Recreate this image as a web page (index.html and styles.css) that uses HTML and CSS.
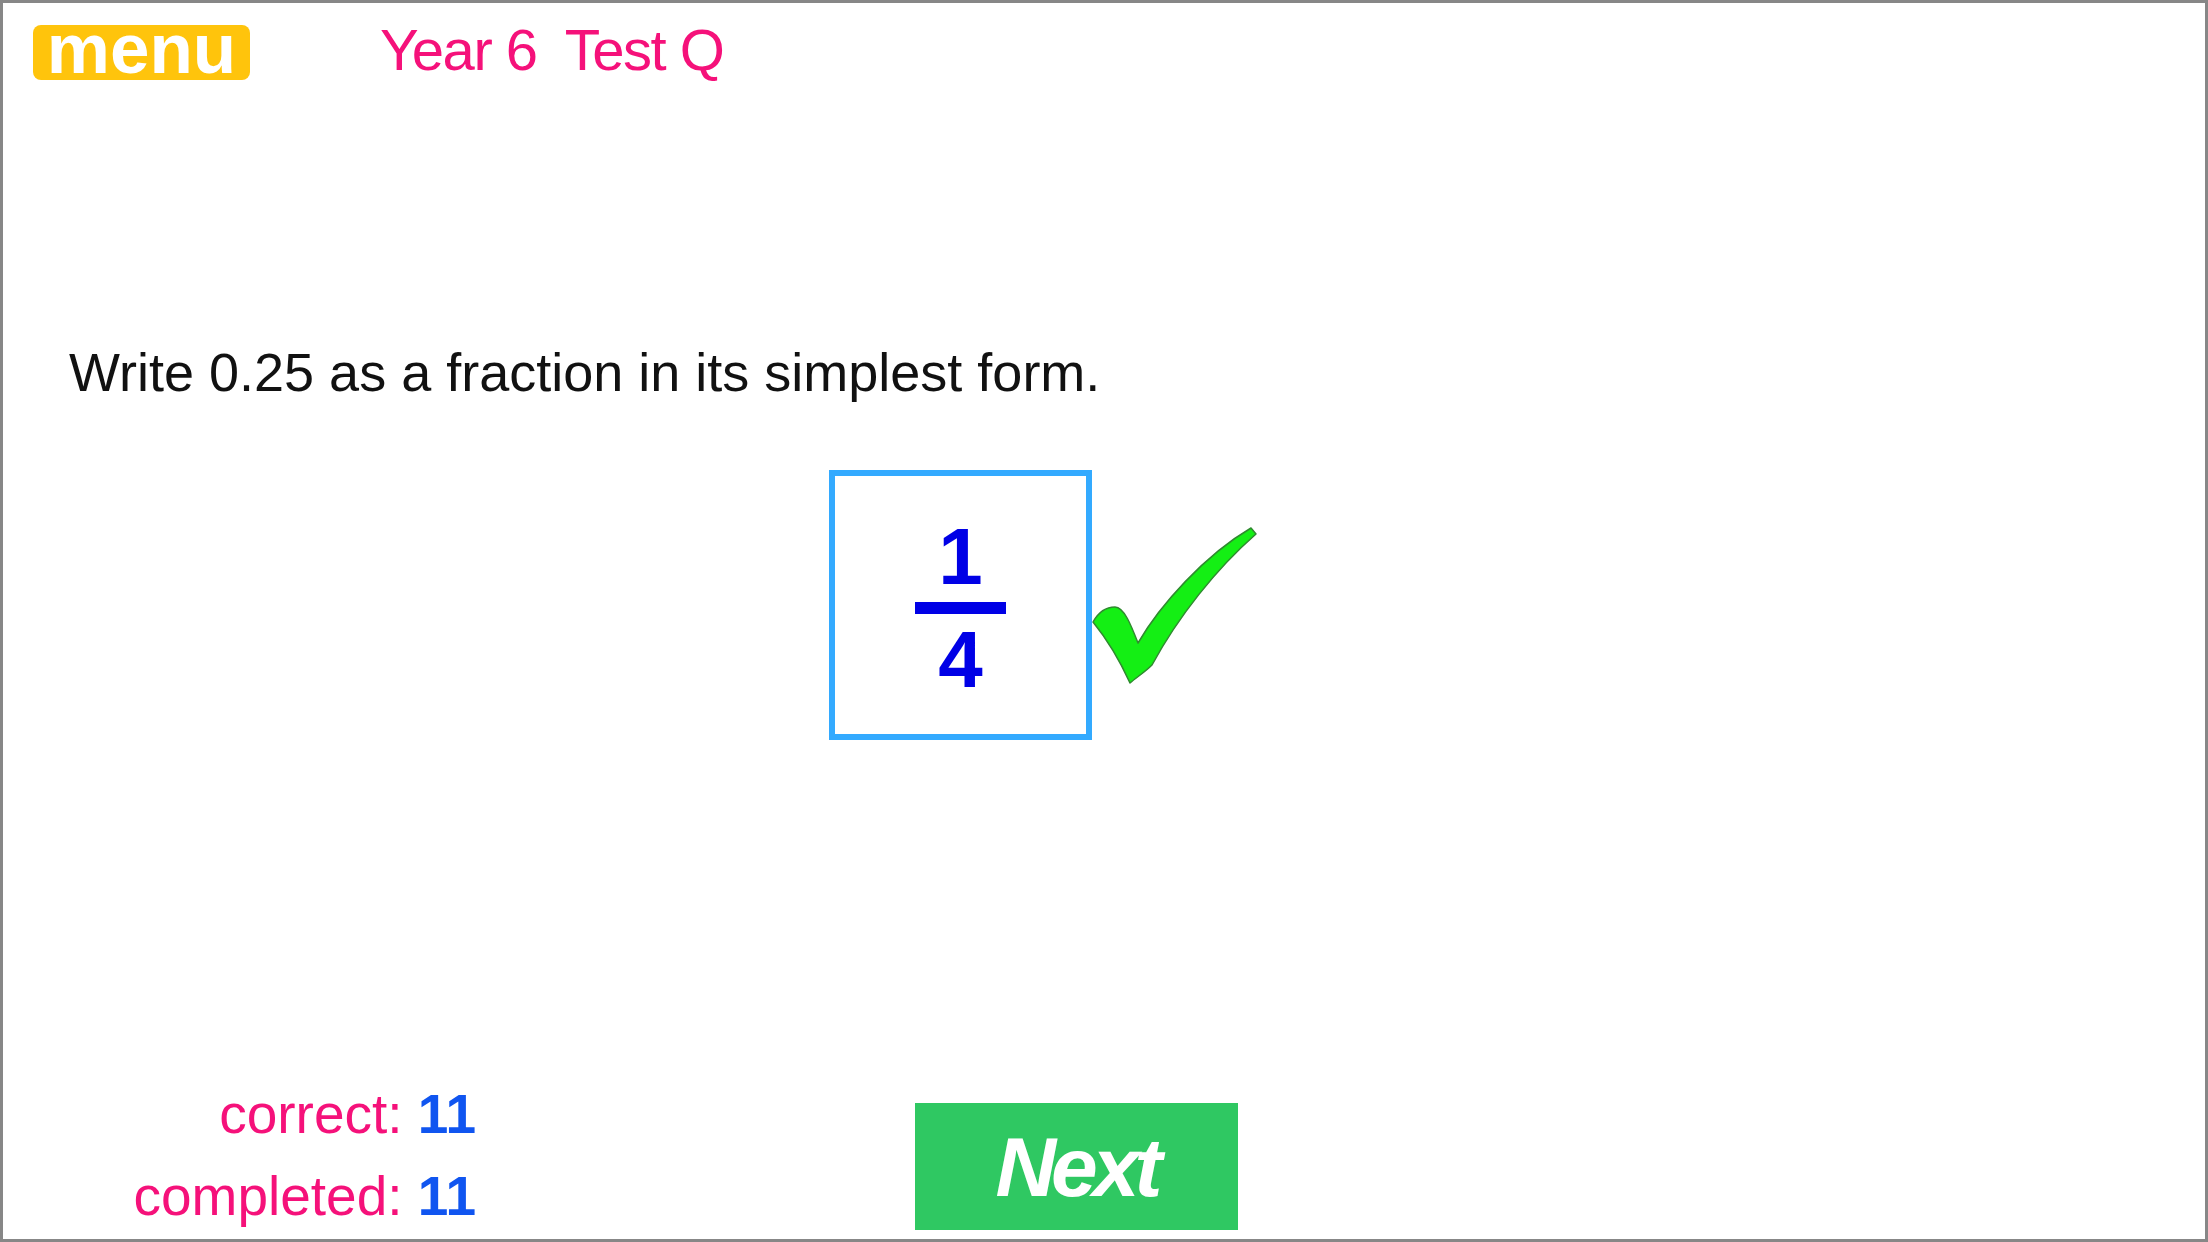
FILE: index.html
```html
<!DOCTYPE html>
<html lang="en">
<head>
  <meta charset="UTF-8" />
  <meta name="viewport" content="width=device-width, initial-scale=1.0"/>
  <title>Year 6 Test Q</title>
  <link rel="stylesheet" href="styles.css">
</head>
<body>
  <div class="frame">
    <div class="top">
      <div class="menu">menu</div>
      <div class="title">Year 6&nbsp; Test Q</div>
    </div>

    <div class="question">Write 0.25 as a fraction in its simplest form.</div>

    <div class="answer-row">
      <div class="answer">
        <div class="num">1</div>
        <div class="bar"></div>
        <div class="num den">4</div>
      </div>
      <svg class="tick" width="170" height="162" viewBox="0 0 170 162">
        <path d="M3,97 C8,88 16,82 25,82 C34,82 41,100 48,118 C70,80 115,30 161,3 L166,9 C126,44 88,92 62,140 C55,147 47,152 40,158 C30,136 16,113 3,97 Z"
              fill="#14ef14" stroke="#2f8a2f" stroke-width="1.5" stroke-linejoin="round"/>
      </svg>
    </div>

    <div class="bottom">
      <div class="stats">
        <div>correct: <b>11</b></div>
        <div>completed: <b>11</b></div>
      </div>
      <button class="next">Next</button>
    </div>
  </div>
</body>
</html>
```

FILE: styles.css
```css
body {
  margin: 0;
  background: #ffffff;
  font-family: 'Liberation Sans', Arial, sans-serif;
}
.frame {
  height: 100vh;
  box-sizing: border-box;
  border: 3px solid #878787;
  display: flex;
  flex-direction: column;
}
.top {
  display: flex;
  align-items: flex-start;
  padding: 22px 0 0 30px;
}
.menu {
  width: 217px;
  height: 55px;
  box-sizing: border-box;
  background: #ffc40c;
  border-radius: 8px;
  color: #ffffff;
  font-size: 71px;
  font-weight: bold;
  line-height: 47px;
  text-align: center;
}
.title {
  margin-left: 130px;
  font-size: 58px;
  line-height: 50px;
  letter-spacing: -1.5px;
  color: #f5117a;
}
.question {
  margin-top: 265px;
  padding-left: 66px;
  font-size: 54px;
  line-height: 1;
  color: #111111;
}
.answer-row {
  display: flex;
  align-items: flex-start;
  margin-top: 71px;
  padding-left: 826px;
}
.answer {
  width: 263px;
  height: 270px;
  box-sizing: border-box;
  border: 6px solid #33aaff;
  padding-top: 41px;
  display: flex;
  flex-direction: column;
  align-items: center;
}
.num {
  font-size: 80px;
  font-weight: bold;
  line-height: 1;
  color: #0000e6;
}
.bar {
  width: 91px;
  height: 12px;
  margin: 5px 0 6px;
  background: #0000e6;
}
.tick {
  margin-left: -2px;
  margin-top: 55px;
}
.bottom {
  margin-top: auto;
  display: flex;
  align-items: flex-end;
}
.stats {
  width: 473px;
  margin-bottom: 2px;
  text-align: right;
  font-size: 55px;
  line-height: 82px;
  color: #f5117a;
}
.stats b {
  color: #1055f0;
}
.next {
  margin: 0 0 9px 439px;
  width: 323px;
  height: 127px;
  padding: 0;
  border: none;
  background: #2fc862;
  color: #ffffff;
  font-family: 'Liberation Sans', Arial, sans-serif;
  font-size: 84px;
  font-weight: bold;
  font-style: italic;
  letter-spacing: -5px;
  line-height: 120px;
  cursor: pointer;
}
```
